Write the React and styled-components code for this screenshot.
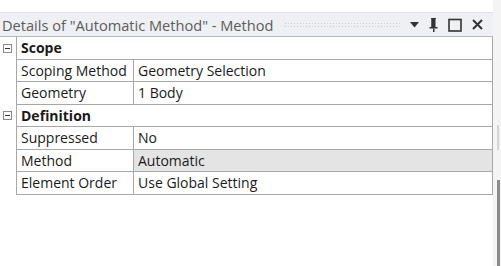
import React from "react";
import styled, { createGlobalStyle } from "styled-components";

const GlobalStyle = createGlobalStyle`
  html, body {
    margin: 0;
    padding: 0;
    background: #fff;
  }
  body {
    font-family: "Open Sans", "Noto Sans", sans-serif;
  }
`;

const Page = styled.div`
  display: flex;
  width: 501px;
  height: 266px;
  overflow: hidden;
`;

const Panel = styled.div`
  width: 493px;
  padding-top: 12px;
  display: flex;
  flex-direction: column;
`;

const Header = styled.div`
  height: 25px;
  box-sizing: border-box;
  border-top: 1px solid #e2e2e2;
  border-bottom: 1px solid #b9b9b9;
  background: #eef0f3;
  display: flex;
  align-items: center;
  padding: 0 10px 0 2px;
`;

const Title = styled.span`
  font-size: 14.6px;
  color: #5c5c5c;
  white-space: nowrap;
`;

const Grip = styled.div`
  flex: 1;
  height: 6px;
  margin: 1px 8px 0 11px;
  background-image: radial-gradient(circle, #c9ccd2 0.8px, transparent 1px);
  background-size: 3px 3px;
`;

const Tools = styled.div`
  display: flex;
  align-items: center;
  gap: 10px;
`;

const Table = styled.div`
  display: flex;
  flex-direction: column;
`;

const Row = styled.div`
  display: grid;
  grid-template-columns: 16px 117px 1fr;
  height: 22.5px;
`;

const Toggle = styled.div`
  display: flex;
  align-items: center;
  justify-content: center;
  padding-right: 1px;
`;

const MinusBox = styled.div`
  width: 9px;
  height: 9px;
  box-sizing: border-box;
  border: 1px solid #8a8a8a;
  position: relative;
  &::after {
    content: "";
    position: absolute;
    left: 1px;
    right: 1px;
    top: 3px;
    height: 1px;
    background: #333;
  }
`;

const Cell = styled.div`
  box-sizing: border-box;
  border-left: 1px solid #a8a8a8;
  border-bottom: 1px solid #a8a8a8;
  ${(p) => p.$last && "border-right: 1px solid #a8a8a8;"}
  ${(p) => p.$span && "grid-column: span 2;"}
  background: ${(p) => (p.$selected ? "#e4e4e4" : "#fff")};
  display: flex;
  align-items: center;
  padding-left: 4px;
  font-size: 14px;
  font-weight: ${(p) => (p.$bold ? 700 : 500)};
  color: #1a1a1a;
  white-space: nowrap;
  overflow: hidden;
`;

const Side = styled.div`
  width: 8px;
  background: #f4f4f4;
  display: flex;
  flex-direction: column;
  align-items: flex-end;
`;

const TrackTop = styled.div`
  margin-top: 125px;
  height: 25px;
  width: 2px;
  margin-right: 2px;
  background: #d4d4d4;
`;

const Thumb = styled.div`
  margin-top: 30px;
  flex: 1;
  width: 3px;
  margin-right: 1px;
  background: #8d8d8d;
`;

const sections = [
  {
    name: "Scope",
    rows: [
      ["Scoping Method", "Geometry Selection"],
      ["Geometry", "1 Body"],
    ],
  },
  {
    name: "Definition",
    rows: [
      ["Suppressed", "No"],
      ["Method", "Automatic", true],
      ["Element Order", "Use Global Setting"],
    ],
  },
];

const Icons = () => (
  <Tools>
    <svg width="9" height="6" viewBox="0 0 9 6">
      <path d="M0 0 H9 L4.5 5.5 Z" fill="#333" />
    </svg>
    <svg width="9" height="14" viewBox="0 0 9 14">
      <path d="M2 0 H7 V1 H6.5 V9 H8.5 V10.5 H0.5 V9 H2.5 V1 H2 Z" fill="#333" />
      <rect x="2.5" y="1" width="2" height="8" fill="#333" />
      <rect x="4" y="10.5" width="1.5" height="3.5" fill="#333" />
    </svg>
    <svg width="14" height="14" viewBox="0 0 14 14">
      <rect x="1" y="1.5" width="12" height="11.5" fill="none" stroke="#333" strokeWidth="1.6" />
    </svg>
    <svg width="11" height="11" viewBox="0 0 11 11">
      <path d="M1 1 L10 10 M10 1 L1 10" stroke="#333" strokeWidth="2" />
    </svg>
  </Tools>
);

export default function App() {
  return (
    <Page>
      <GlobalStyle />
      <Panel>
        <Header>
          <Title>Details of "Automatic Method" - Method</Title>
          <Grip />
          <Icons />
        </Header>
        <Table>
          {sections.map((s) => (
            <React.Fragment key={s.name}>
              <Row>
                <Toggle>
                  <MinusBox />
                </Toggle>
                <Cell $span $last $bold>
                  {s.name}
                </Cell>
              </Row>
              {s.rows.map(([label, value, sel]) => (
                <Row key={label}>
                  <Toggle />
                  <Cell>{label}</Cell>
                  <Cell $last $selected={sel}>
                    {value}
                  </Cell>
                </Row>
              ))}
            </React.Fragment>
          ))}
        </Table>
      </Panel>
      <Side>
        <TrackTop />
        <Thumb />
      </Side>
    </Page>
  );
}
